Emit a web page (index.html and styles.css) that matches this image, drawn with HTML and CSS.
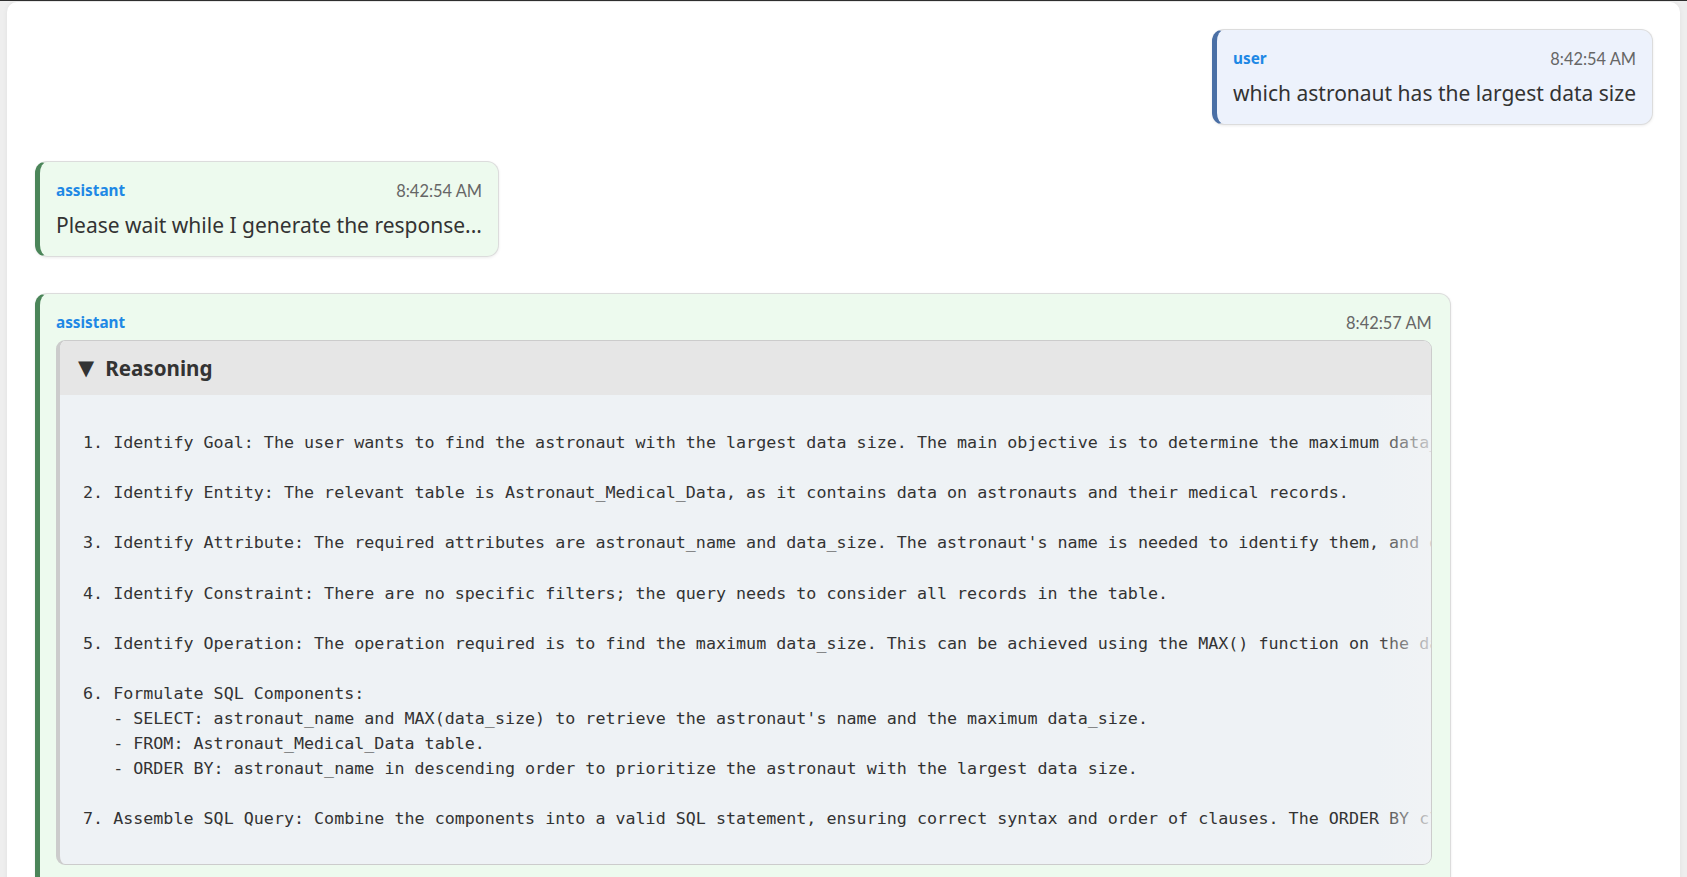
FILE: index.html
```html
<!DOCTYPE html>
<html lang="en">
<head>
<meta charset="utf-8">
<title>Chat</title>
<link rel="stylesheet" href="styles.css">
</head>
<body>
<div class="page">
  <div class="messages">
    <div class="msg msg-user">
      <div class="msg-head">
        <span class="role">user</span>
        <span class="time">8:42:54 AM</span>
      </div>
      <div class="msg-text">which astronaut has the largest data size</div>
    </div>

    <div class="msg msg-assistant">
      <div class="msg-head">
        <span class="role">assistant</span>
        <span class="time">8:42:54 AM</span>
      </div>
      <div class="msg-text">Please wait while I generate the response...</div>
    </div>

    <div class="msg msg-assistant msg-wide">
      <div class="msg-head">
        <span class="role">assistant</span>
        <span class="time">8:42:57 AM</span>
      </div>
      <details class="reasoning" open>
        <summary class="reasoning-summary"><span class="caret">&#9660;</span><span>Reasoning</span></summary>
        <div class="reasoning-body">
<pre class="reasoning-text">1. Identify Goal: The user wants to find the astronaut with the largest data size. The main objective is to determine the maximum data_size value and the astronaut it belongs to.

2. Identify Entity: The relevant table is Astronaut_Medical_Data, as it contains data on astronauts and their medical records.

3. Identify Attribute: The required attributes are astronaut_name and data_size. The astronaut's name is needed to identify them, and data_size is needed to compare sizes.

4. Identify Constraint: There are no specific filters; the query needs to consider all records in the table.

5. Identify Operation: The operation required is to find the maximum data_size. This can be achieved using the MAX() function on the data_size column.

6. Formulate SQL Components:
   - SELECT: astronaut_name and MAX(data_size) to retrieve the astronaut's name and the maximum data_size.
   - FROM: Astronaut_Medical_Data table.
   - ORDER BY: astronaut_name in descending order to prioritize the astronaut with the largest data size.

7. Assemble SQL Query: Combine the components into a valid SQL statement, ensuring correct syntax and order of clauses. The ORDER BY clause is placed at the end of the query.</pre>
        </div>
      </details>
    </div>
  </div>
</div>
</body>
</html>
```

FILE: styles.css
```css
html, body {
  margin: 0;
  padding: 0;
}

body {
  background: #eeeeee;
  border-top: 1px solid #2e2e2e;
  font-family: "Noto Sans", "Open Sans", sans-serif;
  color: #333333;
  overflow: hidden;
}

.page {
  margin: 1px 7px 0 7px;
  background: #ffffff;
  border-radius: 10px 10px 0 0;
  padding: 27px 27px 40px 28px;
  min-height: 900px;
  box-shadow: 0 0 5px rgba(0, 0, 0, 0.06);
}

.messages {
  display: flex;
  flex-direction: column;
  gap: 36px;
}

.msg {
  align-self: flex-start;
  max-width: 87.5%;
  box-sizing: border-box;
  border: 1px solid #dcdcdc;
  border-left-width: 5px;
  border-radius: 12px;
  padding: 16px;
  box-shadow: 0 1px 3px rgba(0, 0, 0, 0.08);
}

.msg-user {
  align-self: flex-end;
  background: #edf2fc;
  border-left-color: #4a6fa5;
}

.msg-assistant {
  background: #edfaee;
  border-left-color: #4b8559;
}

.msg-wide {
  width: 87.5%;
  padding-right: 18px;
  padding-bottom: 40px;
}

.msg-head {
  display: flex;
  justify-content: space-between;
  align-items: center;
  gap: 24px;
  height: 24px;
}

.role {
  font-family: "Noto Sans", sans-serif;
  font-weight: 700;
  font-size: 15.3px;
  color: #1e88e5;
}

.time {
  font-family: Lato, "Noto Sans", sans-serif;
  font-size: 16.4px;
  color: #666666;
}

.msg-text {
  margin-top: 8px;
  font-size: 21px;
  line-height: 30px;
  color: #333333;
  white-space: nowrap;
}

.reasoning {
  margin-top: 6px;
  border: 1px solid #cccccc;
  border-left-width: 4px;
  border-radius: 9px;
  overflow: hidden;
  background: #eef2f5;
}

.reasoning-summary {
  list-style: none;
  display: flex;
  align-items: center;
  gap: 11px;
  height: 54px;
  padding: 0 18px;
  background: #e6e6e6;
  font-family: "Noto Sans", sans-serif;
  font-weight: 700;
  font-size: 20.6px;
  color: #333333;
  cursor: pointer;
}

.reasoning-summary::-webkit-details-marker {
  display: none;
}

.caret {
  font-family: "DejaVu Sans", sans-serif;
  font-size: 21px;
  line-height: 1;
}

.reasoning-body {
  position: relative;
  overflow: hidden;
}

.reasoning-body::after {
  content: "";
  position: absolute;
  top: 0;
  right: 0;
  bottom: 0;
  width: 56px;
  background: linear-gradient(to right, rgba(238, 242, 245, 0), rgba(241, 243, 245, 0.8));
}

.reasoning-text {
  margin: 0;
  padding: 35px 22px 32px 23px;
  font-family: "DejaVu Sans Mono", monospace;
  font-size: 16.7px;
  line-height: 25.1px;
  color: #333333;
  white-space: pre;
  overflow: hidden;
}
```
